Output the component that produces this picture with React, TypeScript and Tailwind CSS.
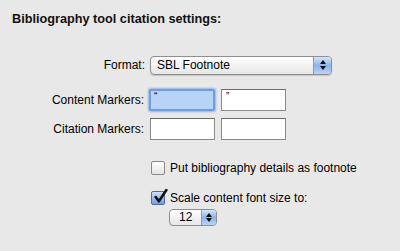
export default function App() {
  return (
    <main
      className="w-[400px] h-[251px] bg-[#e8e8e8] text-black overflow-hidden"
      style={{ fontFamily: '"Liberation Sans", Arial, sans-serif' }}
    >
      {/* Title */}
      <h2 className="pl-[12px] pt-[12px] text-[12.7px] font-bold leading-[15px] text-[#111]">
        Bibliography tool citation settings:
      </h2>

      {/* Format */}
      <div className="flex items-center mt-[28px] h-[20px]">
        <span className="w-[145px] text-right text-[12px]">Format:</span>
        <div className="ml-[5px] flex h-[19px] w-[182px] rounded-[4px] border border-[#8e8e8e] bg-gradient-to-b from-white to-[#e6e6e6] shadow-[0_1px_1px_rgba(0,0,0,0.15)] overflow-hidden">
          <span className="flex-1 pl-[6px] text-[12px] leading-[17px]">SBL Footnote</span>
          <Stepper />
        </div>
      </div>

      {/* Content markers */}
      <div className="flex items-center mt-[14px] h-[22px]">
        <span className="w-[144px] text-right text-[12px]">Content Markers:</span>
        <div className="ml-[5px] h-[22px] w-[66px] rounded-[2px] bg-[#b8d3f8] border-[2px] border-[#6f9de0] shadow-[0_0_2px_1px_rgba(90,140,220,0.6)] px-[3px] text-[10px] leading-[12px] text-black">
          {"\u201c"}
        </div>
        <div className="ml-[6px] h-[22px] w-[65px] bg-white border border-[#8a8a8a] border-t-[#6b6b6b] px-[4px] text-[10px] leading-[13px] text-black">
          {"\u201d"}
        </div>
      </div>

      {/* Citation markers */}
      <div className="flex items-center mt-[7px] h-[22px]">
        <span className="w-[144px] text-right text-[12px]">Citation Markers:</span>
        <div className="ml-[6px] h-[22px] w-[65px] bg-white border border-[#8a8a8a] border-t-[#6b6b6b]" />
        <div className="ml-[6px] h-[22px] w-[65px] bg-white border border-[#8a8a8a] border-t-[#6b6b6b]" />
      </div>

      {/* Checkbox 1 */}
      <div className="flex items-center mt-[20px] pl-[151px] h-[16px]">
        <div className="w-[14px] h-[14px] rounded-[2px] border border-[#8a8a8a] bg-gradient-to-b from-white to-[#e4e4e4]" />
        <span className="ml-[5px] text-[12px]">Put bibliography details as footnote</span>
      </div>

      {/* Checkbox 2 */}
      <div className="flex items-center mt-[14px] pl-[151px] h-[16px]">
        <div className="relative w-[14px] h-[14px] rounded-[2px] border border-[#4a6fa8] bg-gradient-to-b from-[#cfe0f7] to-[#6f9de0]">
          <svg viewBox="0 0 14 14" className="absolute left-[1px] -top-[3px] w-[15px] h-[15px]">
            <path d="M2.5 7.5 L5.5 11.5 L12.5 1" fill="none" stroke="#111" strokeWidth="2.4" strokeLinecap="round" strokeLinejoin="round" />
          </svg>
        </div>
        <span className="ml-[5px] text-[12px]">Scale content font size to:</span>
      </div>

      {/* Font size popup */}
      <div className="mt-[3px] ml-[169px] flex h-[17px] w-[48px] rounded-[4px] border border-[#8e8e8e] bg-gradient-to-b from-white to-[#e6e6e6] overflow-hidden">
        <span className="flex-1 pl-[9px] text-[12px] leading-[15px]">12</span>
        <Stepper small />
      </div>
    </main>
  );
}

function Stepper({ small }: { small?: boolean }) {
  return (
    <div
      className={`flex flex-col items-center justify-center border-l border-[#7e9cc8] bg-gradient-to-b from-[#d6e6fb] via-[#8db4ea] to-[#b9d3f6] ${
        small ? "w-[15px] gap-[1px]" : "w-[18px] gap-[2px]"
      }`}
    >
      <svg viewBox="0 0 6 4" className="w-[6px] h-[4px]">
        <path d="M0 4 L3 0 L6 4 Z" fill="#111" />
      </svg>
      <svg viewBox="0 0 6 4" className="w-[6px] h-[4px]">
        <path d="M0 0 L3 4 L6 0 Z" fill="#111" />
      </svg>
    </div>
  );
}
